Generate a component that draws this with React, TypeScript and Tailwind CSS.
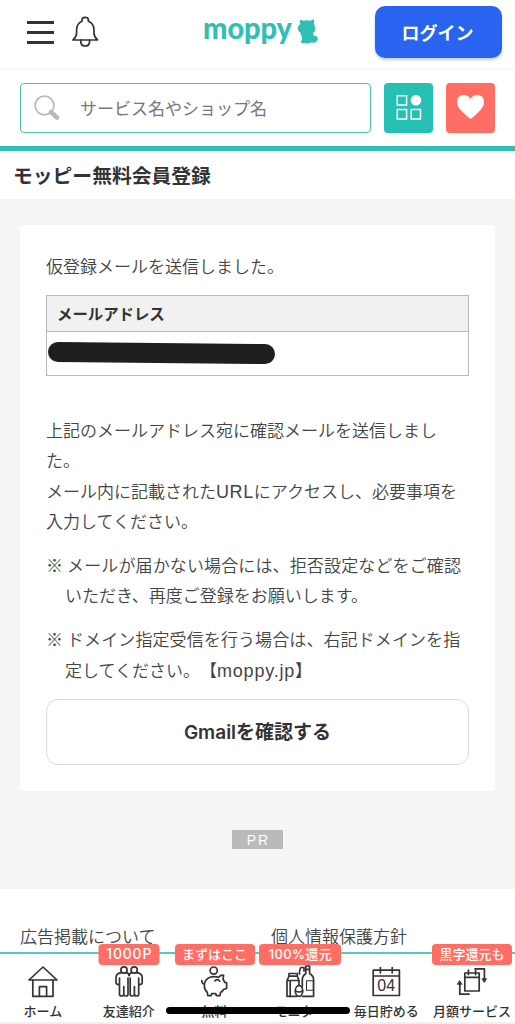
import React from 'react';

const stroke = {
  fill: 'none',
  stroke: '#333',
  strokeWidth: 1.7,
  strokeLinejoin: 'round',
  strokeLinecap: 'round',
} as const;

function BellIcon() {
  return (
    <svg viewBox="0 0 27 31" className="h-[31px] w-[27px]" {...stroke}>
      <path d="M10 5.2V4Q10 1.3 13.2 1.3T16.4 4V5.2Q22 7.5 22 14V17Q22 21 25.6 24H1Q4.6 21 4.6 17V14Q4.6 7.5 10 5.2Z" />
      <path d="M8.8 24.2V25.6Q9 30 13.2 30T17.6 25.6V24.2" />
    </svg>
  );
}

function Logo() {
  return (
    <div className="flex h-[26px] items-start">
      <svg viewBox="0 0 92 32" className="-mt-[1px] h-8 w-[92px] overflow-visible" fill="#2fbfb3">
        <text
          x="0"
          y="21"
          textLength="89"
          lengthAdjust="spacingAndGlyphs"
          className="font-['Lato'] text-[30px] font-black"
        >
          moppy
        </text>
      </svg>
      <svg viewBox="0 0 62 75" className="ml-[2px] h-[25px] w-[21px]" fill="#2fbfb3">
        <path d="M9 4Q12 0 18 5Q30 3 41 5Q48 -1 51 4Q51 10 50 14Q55 22 54 32Q53 39 47 42Q50 46 49 50Q62 50 62 60Q61 70 48 71Q40 70 36 73Q28 75 24 72Q16 74 11 70Q9 66 15 64Q14 57 14 51Q9 50 11 42Q3 38 2 30Q1 20 10 15Q6 8 9 4Z" />
      </svg>
    </div>
  );
}

function HomeIcon() {
  return (
    <>
      <path d="M20 3L34 16H6Z" />
      <path d="M9.8 16V32.3H30V16" />
      <path d="M16.4 32V22.7H23.6V32" />
    </>
  );
}

function FriendsIcon() {
  const person = (
    <>
      <circle cx="15" cy="6" r="3.1" />
      <path d="M12.8 8.6Q7 9 7 13.5V18.7Q7 20.4 10.5 20.8V30.4Q10.5 32 12.6 32T14.8 30.4V22.5M14.8 30.4Q15 32 17 32T19 30.4V20.8M10.5 14V21M19 14V21M17.2 8.6Q20 9 20 11.5" />
    </>
  );
  return (
    <>
      {person}
      <g transform="translate(40.2 0) scale(-1 1)">{person}</g>
    </>
  );
}

function PiggyIcon() {
  return (
    <>
      <circle cx="18.7" cy="6.6" r="3.6" />
      <path d="M15 13.2Q19 12 23.5 13.3Q26 10.6 28.6 11.3L28 15.3Q29.2 16.6 29.7 18.5H31.6V24.5L28.5 25.5Q27.5 27.5 25.5 28.5L25 31.6H21.3L20.8 29.7H16.7L16 31.6H12.8L12.2 28.2Q9.3 26 9.3 21.5Q9.3 15.5 15 13.2Z" />
      <path d="M9.3 20Q6.8 20 6.8 16.5M20 16.8Q22.5 14.4 24.8 17.2" />
    </>
  );
}

function BottlesIcon() {
  return (
    <>
      <path d="M9 9.5H17.3V12.2H9ZM9 12.2L7 16.5V32.3H16.5M17.3 12.2L19 16.5V21M7 16.5H19M10.2 16.5V32" />
      <path d="M19.5 10V7.5L20.7 3.5H24V7" />
      <path d="M25.8 2H29.6V9.5Q33.6 12 33.6 15.5V32.3H22.5M25.8 2V9.5Q22.3 12 22.3 15.5V23M25.8 5.3H29.6" />
      <path d="M26.5 16.7H33.4V26.2H26.5Z" strokeWidth={1.1} />
      <ellipse cx="19" cy="27" rx="3.7" ry="5.3" />
      <path d="M15.5 27Q19 29 22.5 27" />
    </>
  );
}

function CalendarIcon() {
  return (
    <>
      <path d="M7.2 6.2H33.4V31.5H7.2ZM7.2 12H33.4M14.4 3.6V8.8M26.2 3.6V8.8" />
      <text
        x="20.2"
        y="26.8"
        textAnchor="middle"
        fill="#333"
        stroke="none"
        className="font-['Liberation_Sans'] text-[16px]"
      >
        04
      </text>
    </>
  );
}

function MonthlyIcon() {
  return (
    <>
      <path d="M12.8 9H27.2V27H12.8ZM12.8 13.4H27.2M16.4 6V10.6M23.6 6V10.6" />
      <path d="M23 4.8H32.4V16.5M17 30.2H7.8V18.5" />
      <path d="M30.2 14.7H34.6L32.4 18.2ZM5.6 20.3H10L7.8 16.8Z" fill="#333" strokeWidth={0.8} />
    </>
  );
}

interface NavItem {
  label: string;
  icon: React.ReactNode;
  badge?: string;
  badgeClass?: string;
}

const navItems: NavItem[] = [
  { label: 'ホーム', icon: <HomeIcon /> },
  {
    label: '友達紹介',
    icon: <FriendsIcon />,
    badge: '1000P',
    badgeClass: "w-[61px] pl-px font-['Inter'] text-sm tracking-[0.8px]",
  },
  { label: '無料', icon: <PiggyIcon />, badge: 'まずはここ', badgeClass: 'w-20 text-[13px]' },
  {
    label: 'モニター',
    icon: <BottlesIcon />,
    badge: '100%還元',
    badgeClass: "w-[82px] font-['Inter','Noto_Sans_CJK_JP',sans-serif] text-[13px] tracking-[0.4px]",
  },
  { label: '毎日貯める', icon: <CalendarIcon /> },
  { label: '月額サービス', icon: <MonthlyIcon />, badge: '黒字還元も', badgeClass: 'w-20 text-[13px]' },
];

function BottomNav() {
  return (
    <nav className="absolute inset-x-0 bottom-0 grid h-[72px] grid-cols-6 border-t-2 border-[#55c8bf] bg-white">
      {navItems.map((item) => (
        <div key={item.label} className="relative flex flex-col items-center pt-[10px]">
          {item.badge && (
            <span
              className={`absolute -top-[10px] left-1/2 h-[21px] -translate-x-1/2 rounded-[4px] bg-[#ff6e64] text-center leading-[20px] font-medium whitespace-nowrap text-white ${item.badgeClass}`}
            >
              {item.badge}
            </span>
          )}
          <svg viewBox="0 0 40 36" className="h-9 w-10" {...stroke}>
            {item.icon}
          </svg>
          <span className="text-[13px] leading-[22px] font-medium whitespace-nowrap text-[#333]">
            {item.label}
          </span>
        </div>
      ))}
      {/* Home indicator */}
      <div className="absolute top-[53px] left-[166px] h-[7px] w-[184px] rounded-full bg-black" />
      <div className="absolute inset-x-0 bottom-0 h-[2px] bg-[#f0f0f0]" />
    </nav>
  );
}

function Header() {
  return (
    <header>
      <div className="flex h-[70px] items-start justify-between border-b-2 border-[#f7f7f7] pr-[13px] pl-[27px]">
        <div className="flex items-start">
          <div className="mt-[21px] flex w-[27px] flex-col gap-[7px]">
            <div className="h-[3px] bg-[#333]" />
            <div className="h-[3px] bg-[#333]" />
            <div className="h-[3px] bg-[#333]" />
          </div>
          <div className="mt-4 ml-[18px]">
            <BellIcon />
          </div>
        </div>
        <div className="mt-[19px] ml-[46px]">
          <Logo />
        </div>
        <button className="mt-[6px] h-[52px] w-[127px] rounded-[10px] bg-[#2864ef] pr-[2px] text-lg font-bold text-white shadow-[0_2px_3px_rgba(40,100,239,0.3)]">
          ログイン
        </button>
      </div>
      <div className="flex h-[81px] items-start border-b-[5px] border-[#2fbfb3] px-5 pt-[13px]">
        <div className="flex h-[50px] w-[351px] items-center rounded-[4px] border-[1.5px] border-[#4cbfb0] pl-[13px]">
          <svg viewBox="0 0 26 26" className="h-[26px] w-[26px]" fill="none" stroke="#b9b9b9">
            <circle cx="10.5" cy="10.5" r="9.4" strokeWidth="1.8" />
            <path d="M17 17L23 22.5" strokeWidth="4.6" strokeLinecap="round" />
          </svg>
          <span className="ml-5 text-[17px] text-[#777]">サービス名やショップ名</span>
        </div>
        <button className="ml-[13px] flex h-[50px] w-[49px] items-center justify-center rounded-[4px] bg-[#26bfb3]">
          <svg viewBox="0 0 26 26" className="-mt-[2px] h-[26px] w-[26px]" fill="none" stroke="#fff" strokeWidth="1.5">
            <path d="M1.3 1.7H10.6V11H1.3ZM1.3 15.6H10.6V24.9H1.3ZM15.2 15.6H24.5V24.9H15.2Z" />
            <circle cx="20" cy="6.3" r="5.3" fill="#fff" stroke="none" />
          </svg>
        </button>
        <button className="ml-[13px] flex h-[50px] w-[49px] items-center justify-center rounded-[4px] bg-[#ff6e64]">
          <svg viewBox="0 0 27 24" className="-mt-[2px] h-6 w-[27px]" fill="#fff">
            <path d="M13.5 24Q11 22.3 6 17.5Q0 12 0 7Q0 0 7 0Q11 0 13.5 3.7Q16 0 20 0Q27 0 27 7Q27 12 21 17.5Q16 22.3 13.5 24Z" />
          </svg>
        </button>
      </div>
    </header>
  );
}

export default function App() {
  return (
    <div className="relative h-[1024px] w-[515px] overflow-hidden bg-white font-['Noto_Sans_CJK_JP',sans-serif] text-[#444]">
      <Header />

      <h1 className="h-12 pl-[13px] text-[19.8px] leading-[48px] font-bold text-[#333]">
        モッピー無料会員登録
      </h1>

      <main className="h-[690px] bg-[#f7f5f3] px-5 pt-[26px]">
        <section className="h-[566px] rounded-[4px] bg-white px-[26px] pt-[26px] text-[17px] leading-[30.2px] font-[350] [text-spacing-trim:space-all]">
          <p>仮登録メールを送信しました。</p>

          <div className="mt-[14px] h-[81px] w-[423px] border border-[#b9b9b9]">
            <div className="h-[36px] border-b border-[#b9b9b9] bg-[#f1f1f1] pl-[10px] text-[15.4px] leading-[34px] font-bold text-[#333]">
              メールアドレス
            </div>
            <div className="mt-[11px] ml-px h-5 w-[227px] rotate-[0.6deg] rounded-full bg-[#1f1f1f]" />
          </div>

          <div className="mt-[39px] whitespace-nowrap">
            <p>上記のメールアドレス宛に確認メールを送信しまし</p>
            <p>た。</p>
            <p>
              メール内に記載された
              <span className="font-['Liberation_Sans'] text-lg leading-none tracking-[0.6px]">URL</span>
              にアクセスし、必要事項を
            </p>
            <p>入力してください。</p>
          </div>
          <div className="mt-[14px] whitespace-nowrap">
            <p className="tracking-[0.13px]">※ メールが届かない場合には、拒否設定などをご確認</p>
            <p className="pl-[19px]">いただき、再度ご登録をお願いします。</p>
          </div>
          <div className="mt-[14px] whitespace-nowrap">
            <p className="tracking-[0.1px]">※ ドメイン指定受信を行う場合は、右記ドメインを指</p>
            <p className="pl-[19px]">
              定してください。【
              <span className="font-['Liberation_Sans'] text-lg leading-none tracking-[0.8px]">moppy.jp</span>
              】
            </p>
          </div>

          <button className="mt-[14px] h-[66px] w-[423px] rounded-xl border-[1.5px] border-[#dcdcdc] pt-[2px] font-['Inter','Noto_Sans_CJK_JP',sans-serif] text-[19px] font-semibold text-[#333]">
            Gmailを確認する
          </button>
        </section>

        <div className="mx-auto mt-[39px] h-[19px] w-[51px] bg-[#bababa] pl-[2px] text-center font-['Liberation_Sans'] text-sm leading-[20px] tracking-[2px] text-white">
          PR
        </div>
      </main>

      <footer className="flex px-5 pt-[32px] text-[17px] leading-[30px] font-[350]">
        <span className="w-[251px]">広告掲載について</span>
        <span>個人情報保護方針</span>
      </footer>

      <BottomNav />
    </div>
  );
}
